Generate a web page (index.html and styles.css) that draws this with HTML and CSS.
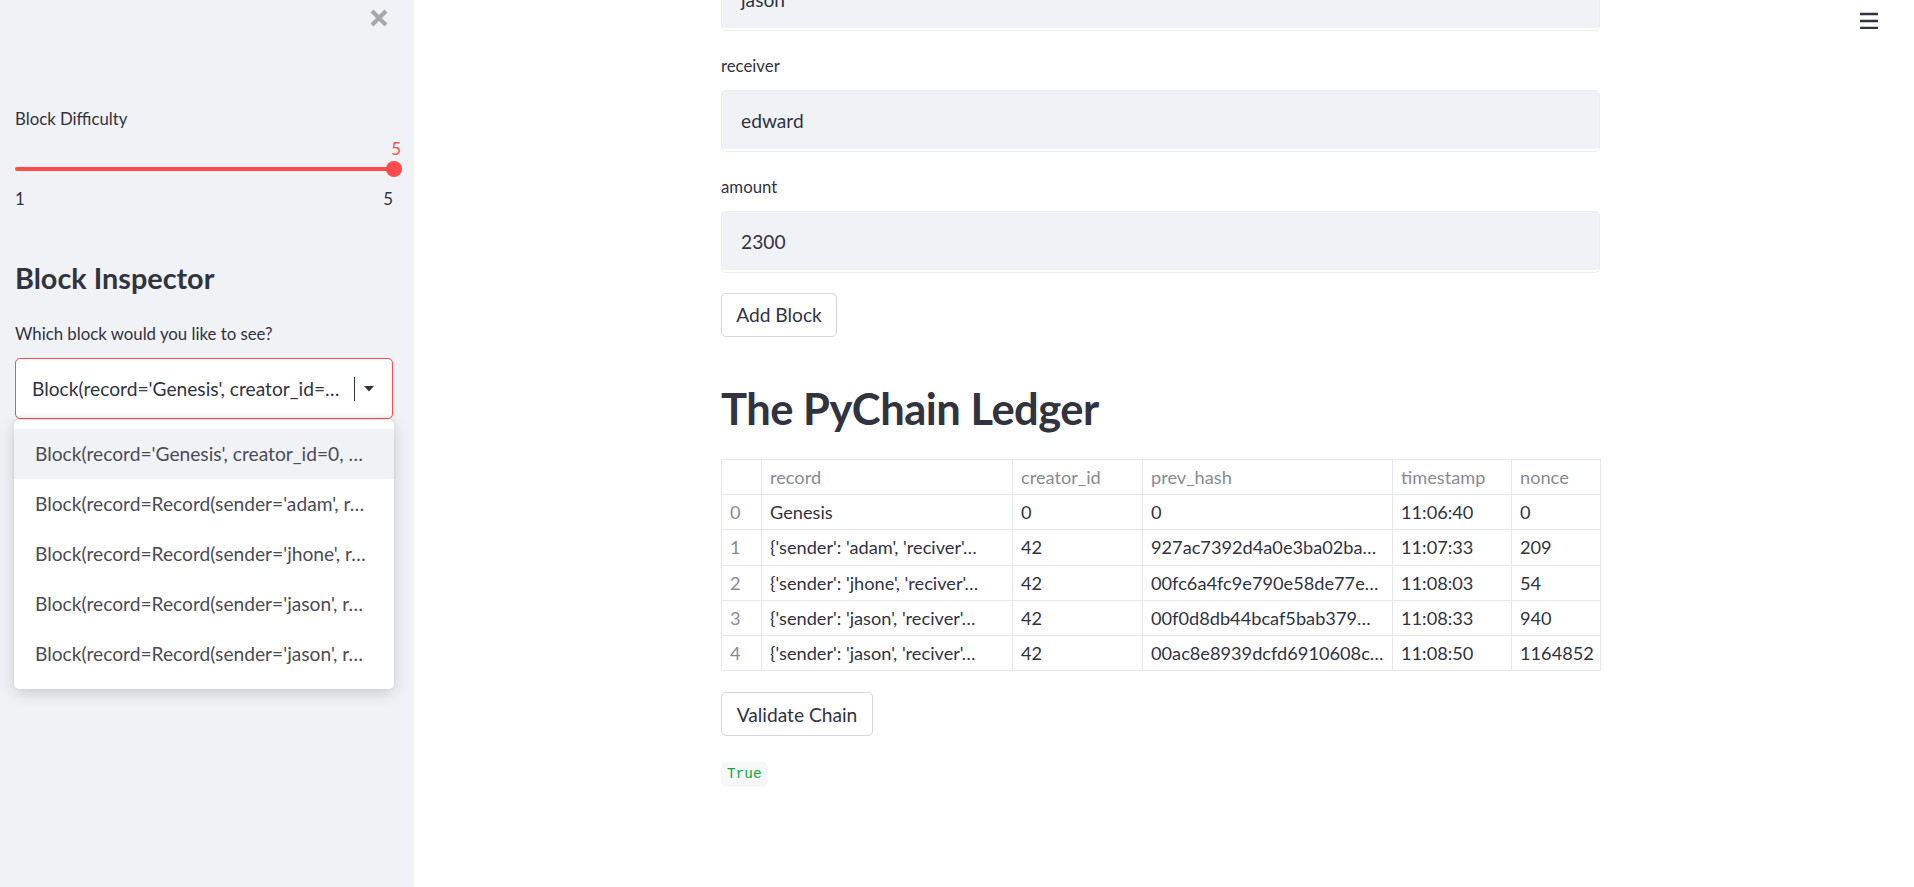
FILE: index.html
```html
<!DOCTYPE html>
<html lang="en">
<head>
<meta charset="utf-8">
<title>PyChain</title>
<link rel="stylesheet" href="styles.css">
</head>
<body>
<div class="app">
  <aside class="sidebar">
    <button class="close-btn" aria-label="Close sidebar">
      <svg width="18" height="18" viewBox="0 0 18 18"><path d="M2 2 L16 16 M16 2 L2 16" stroke="#a6a8af" stroke-width="4.2" stroke-linecap="butt" fill="none"/></svg>
    </button>
    <div class="sb-content">
      <div class="field-label">Block Difficulty</div>
      <div class="slider">
        <div class="slider-value">5</div>
        <div class="track"><div class="thumb"></div></div>
        <div class="ticks"><span>1</span><span>5</span></div>
      </div>
      <h2 class="sb-heading">Block Inspector</h2>
      <div class="field-label">Which block would you like to see?</div>
      <div class="select-wrap">
        <div class="select">
          <span class="select-text">Block(record='Genesis', creator_id=…</span>
          <span class="select-divider"></span>
          <svg class="select-arrow" width="10" height="6" viewBox="0 0 10 6"><path d="M0 0 L10 0 L5 5.5 Z" fill="#31333f"/></svg>
        </div>
        <ul class="menu">
          <li class="menu-item active">Block(record='Genesis', creator_id=0, …</li>
          <li class="menu-item">Block(record=Record(sender='adam', r…</li>
          <li class="menu-item">Block(record=Record(sender='jhone', r…</li>
          <li class="menu-item">Block(record=Record(sender='jason', r…</li>
          <li class="menu-item">Block(record=Record(sender='jason', r…</li>
        </ul>
      </div>
    </div>
  </aside>

  <main class="main">
    <div class="col">
      <div class="input first-input"><span class="input-text">jason</span></div>

      <div class="field">
        <div class="field-label">receiver</div>
        <div class="input"><span class="input-text">edward</span></div>
      </div>

      <div class="field">
        <div class="field-label">amount</div>
        <div class="input"><span class="input-text">2300</span></div>
      </div>

      <button class="btn add-btn">Add Block</button>

      <h1 class="title">The PyChain Ledger</h1>

      <table class="ledger">
        <colgroup>
          <col class="c-idx"><col class="c-rec"><col class="c-cre"><col class="c-hash"><col class="c-ts"><col class="c-non">
        </colgroup>
        <thead>
          <tr><th></th><th>record</th><th>creator_id</th><th>prev_hash</th><th>timestamp</th><th>nonce</th></tr>
        </thead>
        <tbody>
          <tr><td class="idx">0</td><td>Genesis</td><td>0</td><td>0</td><td>11:06:40</td><td>0</td></tr>
          <tr><td class="idx">1</td><td>{'sender': 'adam', 'reciver'…</td><td>42</td><td>927ac7392d4a0e3ba02ba…</td><td>11:07:33</td><td>209</td></tr>
          <tr><td class="idx">2</td><td>{'sender': 'jhone', 'reciver'…</td><td>42</td><td>00fc6a4fc9e790e58de77e…</td><td>11:08:03</td><td>54</td></tr>
          <tr><td class="idx">3</td><td>{'sender': 'jason', 'reciver'…</td><td>42</td><td>00f0d8db44bcaf5bab379…</td><td>11:08:33</td><td>940</td></tr>
          <tr><td class="idx">4</td><td>{'sender': 'jason', 'reciver'…</td><td>42</td><td>00ac8e8939dcfd6910608c…</td><td>11:08:50</td><td>1164852</td></tr>
        </tbody>
      </table>

      <button class="btn validate-btn">Validate Chain</button>

      <div class="result"><code class="code-true">True</code></div>
    </div>
  </main>

  <button class="hamburger" aria-label="Menu">
    <svg width="18" height="18" viewBox="0 0 18 18"><path d="M0 3 H18 M0 10 H18 M0 17 H18" stroke="#31333f" stroke-width="2.4" fill="none"/></svg>
  </button>
</div>
</body>
</html>
```

FILE: styles.css
```css
* { box-sizing: border-box; }

html, body {
  margin: 0;
  padding: 0;
  height: 100%;
  overflow: hidden;
}

body {
  font-family: "Lato", "Roboto", "Liberation Sans", sans-serif;
  color: #31333f;
  background: #ffffff;
}

.app {
  display: flex;
  height: 887px;
  position: relative;
}

/* ---------- Sidebar ---------- */
.sidebar {
  width: 414px;
  flex: 0 0 414px;
  background: #f0f2f6;
  position: relative;
  height: 100%;
}

.close-btn {
  position: absolute;
  top: 9px;
  left: 370px;
  width: 18px;
  height: 18px;
  padding: 0;
  border: 0;
  background: transparent;
  display: flex;
}

.sb-content {
  padding: 107px 21px 0 15px;
  display: flex;
  flex-direction: column;
}

.field-label {
  font-size: 16.8px;
  line-height: 24px;
  margin-bottom: 12px;
  color: #31333f;
}

.sb-content > .field-label:first-child {
  margin-bottom: 8px;
}

.slider {
  display: flex;
  flex-direction: column;
}

.slider-value {
  align-self: flex-end;
  margin-right: -11px;
  color: #ff4b4b;
  font-size: 16.8px;
  line-height: 20px;
  height: 20px;
  width: 16px;
  text-align: center;
}

.track {
  height: 4px;
  margin-top: 8px;
  background: #ff4b4b;
  border-radius: 2px;
  position: relative;
}

.thumb {
  position: absolute;
  right: -9px;
  top: -6px;
  width: 16px;
  height: 16px;
  border-radius: 50%;
  background: #ff4b4b;
}

.ticks {
  display: flex;
  justify-content: space-between;
  margin-top: 18px;
  font-size: 16.8px;
  line-height: 20px;
  color: #31333f;
}

.sb-heading {
  margin: 52px 0 27px;
  font-size: 28.8px;
  line-height: 34px;
  font-weight: 700;
  color: #31333f;
}

.select-wrap {
  position: relative;
}

.select {
  height: 61px;
  background: #ffffff;
  border: 1px solid #ff4b4b;
  border-radius: 5px;
  display: flex;
  align-items: center;
  padding: 0 0 0 16px;
  box-shadow: inset 0 -6px 8px -8px rgba(0,0,0,0.12);
}

.select-text {
  font-size: 19.2px;
  white-space: nowrap;
  overflow: hidden;
  width: 322px;
  flex: 0 0 322px;
}

.select-divider {
  width: 1px;
  height: 24px;
  background: #31333f;
  margin-left: 0;
}

.select-arrow {
  margin-left: 9px;
}

.menu {
  position: absolute;
  top: 62px;
  left: -1px;
  width: 380px;
  margin: 0;
  padding: 9px 0 10px;
  list-style: none;
  background: #ffffff;
  border-radius: 5px;
  box-shadow: 0 4px 16px rgba(0,0,0,0.16), 0 0 4px rgba(0,0,0,0.06);
  z-index: 5;
}

.menu-item {
  height: 50px;
  line-height: 50px;
  padding-left: 21px;
  font-size: 19.2px;
  color: #4a4c55;
  white-space: nowrap;
  overflow: hidden;
}

.menu-item.active {
  background: #f0f2f6;
}

/* ---------- Main ---------- */
.main {
  flex: 1;
  padding-right: 7px;
  overflow: hidden;
}

.col {
  width: 879px;
  margin: 0 auto;
  display: flex;
  flex-direction: column;
  align-items: flex-start;
}

.input {
  width: 879px;
  height: 61px;
  background: #f0f2f6;
  border: 1px solid #eceef2;
  border-bottom: 2px solid #ffffff;
  box-shadow: 0 1px 0 #eceef2;
  border-radius: 5px;
  display: flex;
  align-items: center;
  padding-left: 19px;
  font-size: 19.2px;
  color: #31333f;
}

.first-input {
  margin-top: -31px;
}

.field {
  margin-top: 24px;
}

.btn {
  font-family: inherit;
  font-size: 19.2px;
  color: #31333f;
  background: #ffffff;
  border: 1px solid #d6d6d9;
  border-radius: 5px;
  height: 44px;
  padding: 0 15px;
  line-height: 1;
}

.add-btn {
  margin-top: 21px;
  width: 116px;
  padding: 0;
}

.title {
  margin: 45px 0 0;
  font-size: 43.5px;
  line-height: 53px;
  font-weight: 700;
  color: #31333f;
  letter-spacing: -0.5px;
}

.ledger {
  margin-top: 24px;
  width: 879px;
  table-layout: fixed;
  border-collapse: collapse;
  font-size: 18.2px;
  color: #31333f;
}

.c-idx { width: 40px; }
.c-rec { width: 251px; }
.c-cre { width: 130px; }
.c-hash { width: 250px; }
.c-ts { width: 119px; }
.c-non { width: 89px; }

.ledger th,
.ledger td {
  border: 1px solid #e7e8ec;
  height: 35.2px;
  padding: 0 3px 0 8px;
  text-align: left;
  white-space: nowrap;
  overflow: hidden;
  text-overflow: clip;
  font-weight: 400;
}

.ledger th {
  color: #8a8b92;
}

.ledger td.idx {
  color: #8a8b92;
}

.validate-btn {
  margin-top: 21px;
  width: 152px;
  padding: 0;
}

.result {
  margin-top: 26px;
}

.code-true {
  display: inline-block;
  height: 25px;
  line-height: 25px;
  padding: 0 6px;
  background: #f6f7f9;
  border-radius: 5px;
  color: #09ab3b;
  font-family: "Liberation Mono", "DejaVu Sans Mono", monospace;
  font-size: 14.4px;
}

.hamburger {
  position: absolute;
  top: 11px;
  left: 1860px;
  width: 18px;
  height: 18px;
  padding: 0;
  border: 0;
  background: transparent;
  display: flex;
}
```
